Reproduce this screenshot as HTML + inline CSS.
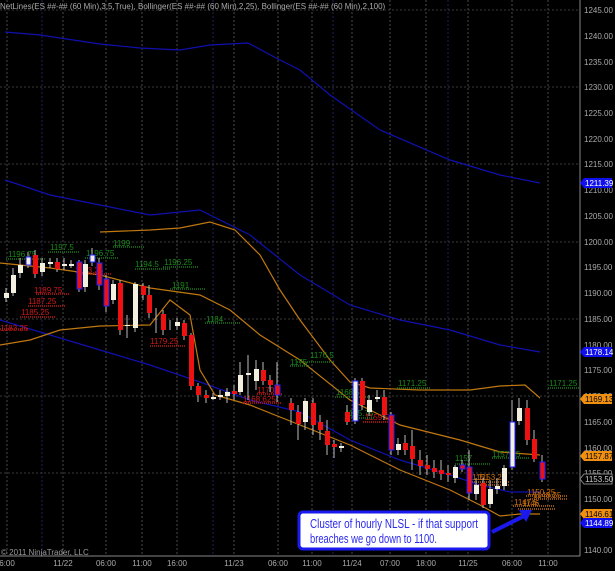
<!DOCTYPE html>
<html><head><meta charset="utf-8"><style>
html,body{margin:0;padding:0;background:#000;width:615px;height:571px;overflow:hidden}
svg{display:block}
text{font-family:"Liberation Sans",sans-serif}
</style></head><body>
<svg width="615" height="571" viewBox="0 0 615 571" xmlns="http://www.w3.org/2000/svg">
<rect width="615" height="571" fill="#000"/>
<g stroke="#4a4a4a" stroke-width="1" stroke-dasharray="2,2">
<line x1="7" y1="0" x2="7" y2="556"/><line x1="63" y1="0" x2="63" y2="556"/><line x1="106" y1="0" x2="106" y2="556"/>
<line x1="142" y1="0" x2="142" y2="556"/><line x1="177" y1="0" x2="177" y2="556"/><line x1="234" y1="0" x2="234" y2="556"/>
<line x1="278" y1="0" x2="278" y2="556"/><line x1="312" y1="0" x2="312" y2="556"/><line x1="352" y1="0" x2="352" y2="556"/>
<line x1="390" y1="0" x2="390" y2="556"/><line x1="426" y1="0" x2="426" y2="556"/><line x1="468" y1="0" x2="468" y2="556"/>
<line x1="512" y1="0" x2="512" y2="556"/><line x1="548" y1="0" x2="548" y2="556"/>
</g>
<g stroke="#22225a" stroke-width="1" stroke-dasharray="2,2">
<line x1="42" y1="0" x2="42" y2="556"/><line x1="213" y1="0" x2="213" y2="556"/><line x1="333" y1="0" x2="333" y2="556"/><line x1="448" y1="0" x2="448" y2="556"/>
</g>
<g stroke="#3a3a3a" stroke-width="1" stroke-dasharray="2,2">
<line x1="0" y1="10" x2="580" y2="10"/><line x1="0" y1="87" x2="580" y2="87"/><line x1="0" y1="164" x2="580" y2="164"/>
<line x1="0" y1="242" x2="580" y2="242"/><line x1="0" y1="319" x2="580" y2="319"/><line x1="0" y1="396" x2="580" y2="396"/><line x1="0" y1="473" x2="580" y2="473"/>
</g>
<line x1="580" y1="0" x2="580" y2="556" stroke="#888"/>
<line x1="0" y1="556" x2="580" y2="556" stroke="#888"/>
<g fill="none" stroke="#1010b0" stroke-width="1.2">
<polyline points="5,32 40,35 100,44 140,48 180,50 210,45 248,43 280,60 300,70 330,95 380,130 450,160 500,175 540,183"/>
<polyline points="5,180 50,195 100,205 150,215 200,210 250,235 300,275 350,305 400,320 450,330 500,345 540,352"/>
<polyline points="0,320 50,335 100,350 150,365 200,382 250,400 300,412 350,440 400,460 450,475 480,485 510,492 540,492"/>
</g>
<g fill="none" stroke="#c07810" stroke-width="1.2">
<polyline points="100,232 150,230 180,228 210,222 235,230 260,255 280,290 300,320 330,360 350,382 370,388 420,390 470,390 500,386 525,385 540,398"/>
<polyline points="0,263 50,268 100,275 150,288 200,295 230,310 260,335 300,360 350,400 400,425 460,440 500,452 540,455"/>
<polyline points="0,345 30,340 60,330 100,326 150,325 170,300 190,315 200,370 215,395 250,405 300,425 350,445 400,470 450,490 480,505 500,516 520,514 540,514"/>
</g>
<g font-size="8">
<g fill="#1a8a1a">
<text x="8" y="257">1196.75</text><text x="50" y="250">1197.5</text><text x="86" y="256">1196.75</text>
<text x="113" y="246">1199</text><text x="135" y="267">1194.5</text><text x="164" y="265">1196.25</text>
<text x="172" y="288">1191</text><text x="206" y="322">1184</text>
<text x="310" y="358">1176.5</text><text x="290" y="365">1175</text>
<text x="398" y="386">1171.25</text><text x="549" y="386">1171.25</text>
<text x="336" y="395">1168.5</text><text x="345" y="416">1165.75</text>
<text x="455" y="461">1157</text><text x="492" y="457">1157.75</text>
</g>
<g fill="#d01818">
<text x="34" y="293">1189.75</text><text x="28" y="304">1187.25</text><text x="21" y="315">1185.25</text>
<text x="0" y="331">1183.25</text><text x="75" y="273">1193.25</text><text x="150" y="344">1179.25</text>
<text x="257" y="393">1170</text><text x="243" y="402">1168.625</text><text x="365" y="420">1159.5</text>
</g>
<g fill="#d07010">
<text x="472" y="480">1151</text><text x="478" y="480">1153.25</text>
<text x="527" y="495">1150.25</text><text x="533" y="498">1148.25</text>
<text x="514" y="505">1147.5</text><text x="522" y="506">1146</text>
</g>
</g>
<g stroke-width="1.5" stroke-dasharray="1,1" fill="none">
<g stroke="#1a7a1a">
<line x1="6" y1="259" x2="45" y2="259"/><line x1="48" y1="252" x2="80" y2="252"/><line x1="85" y1="258" x2="118" y2="258"/>
<line x1="113" y1="247" x2="145" y2="247"/><line x1="135" y1="269" x2="170" y2="269"/><line x1="163" y1="267" x2="198" y2="267"/>
<line x1="170" y1="289" x2="205" y2="289"/><line x1="205" y1="323" x2="240" y2="323"/>
<line x1="297" y1="362" x2="335" y2="362"/><line x1="290" y1="366" x2="310" y2="366"/><line x1="397" y1="388" x2="430" y2="388"/>
<line x1="548" y1="388" x2="580" y2="388"/><line x1="455" y1="464" x2="490" y2="464"/><line x1="492" y1="458" x2="530" y2="458"/>
<line x1="335" y1="397" x2="370" y2="397"/><line x1="345" y1="418" x2="375" y2="418"/>
</g>
<g stroke="#c81515">
<line x1="36" y1="294" x2="70" y2="294"/><line x1="28" y1="306" x2="65" y2="306"/><line x1="20" y1="317" x2="55" y2="317"/>
<line x1="0" y1="329" x2="27" y2="329"/><line x1="80" y1="274" x2="112" y2="274"/><line x1="150" y1="346" x2="185" y2="346"/>
<line x1="257" y1="394" x2="282" y2="394"/><line x1="242" y1="403" x2="282" y2="403"/><line x1="363" y1="422" x2="397" y2="422"/>
</g>
<g stroke="#c06a10">
<line x1="470" y1="482" x2="510" y2="482"/><line x1="474" y1="485" x2="510" y2="485"/>
<line x1="526" y1="496" x2="568" y2="496"/><line x1="530" y1="499" x2="568" y2="499"/>
<line x1="513" y1="506" x2="555" y2="506"/><line x1="518" y1="509" x2="555" y2="509"/>
</g>
</g>
<g stroke="#bbb" stroke-width="1">
<line x1="6" y1="288" x2="6" y2="302"/><line x1="13" y1="268" x2="13" y2="296"/><line x1="20" y1="258" x2="20" y2="278"/>
<line x1="28" y1="252" x2="28" y2="268"/><line x1="35" y1="250" x2="35" y2="278"/><line x1="42" y1="258" x2="42" y2="276"/>
<line x1="50" y1="258" x2="50" y2="268"/><line x1="57" y1="258" x2="57" y2="272"/><line x1="64" y1="258" x2="64" y2="270"/>
<line x1="71" y1="260" x2="71" y2="268"/><line x1="79" y1="260" x2="79" y2="292"/><line x1="85" y1="260" x2="85" y2="292"/>
<line x1="92" y1="248" x2="92" y2="266"/><line x1="99" y1="258" x2="99" y2="290"/><line x1="106" y1="275" x2="106" y2="312"/>
<line x1="113" y1="280" x2="113" y2="304"/><line x1="120" y1="280" x2="120" y2="335"/><line x1="127" y1="315" x2="127" y2="338"/>
<line x1="135" y1="282" x2="135" y2="332"/><line x1="143" y1="283" x2="143" y2="300"/><line x1="149" y1="285" x2="149" y2="318"/>
<line x1="156" y1="308" x2="156" y2="333"/><line x1="163" y1="310" x2="163" y2="335"/><line x1="170" y1="320" x2="170" y2="330"/>
<line x1="177" y1="318" x2="177" y2="330"/><line x1="184" y1="320" x2="184" y2="340"/><line x1="191" y1="333" x2="191" y2="390"/>
<line x1="198" y1="383" x2="198" y2="402"/><line x1="206" y1="390" x2="206" y2="403"/><line x1="213" y1="393" x2="213" y2="400"/>
<line x1="220" y1="390" x2="220" y2="400"/><line x1="227" y1="388" x2="227" y2="403"/><line x1="234" y1="385" x2="234" y2="400"/>
<line x1="240" y1="362" x2="240" y2="395"/><line x1="248" y1="355" x2="248" y2="400"/><line x1="256" y1="360" x2="256" y2="390"/>
<line x1="263" y1="362" x2="263" y2="385"/><line x1="270" y1="375" x2="270" y2="392"/><line x1="277" y1="362" x2="277" y2="402"/>
<line x1="291" y1="398" x2="291" y2="425"/><line x1="298" y1="405" x2="298" y2="440"/><line x1="305" y1="398" x2="305" y2="430"/>
<line x1="313" y1="398" x2="313" y2="435"/><line x1="320" y1="415" x2="320" y2="440"/><line x1="327" y1="420" x2="327" y2="455"/>
<line x1="334" y1="440" x2="334" y2="458"/><line x1="341" y1="443" x2="341" y2="452"/><line x1="347" y1="405" x2="347" y2="425"/>
<line x1="355" y1="378" x2="355" y2="424"/><line x1="362" y1="378" x2="362" y2="410"/><line x1="369" y1="395" x2="369" y2="416"/>
<line x1="377" y1="390" x2="377" y2="402"/><line x1="384" y1="390" x2="384" y2="420"/><line x1="391" y1="412" x2="391" y2="455"/>
<line x1="398" y1="438" x2="398" y2="455"/><line x1="405" y1="435" x2="405" y2="455"/><line x1="412" y1="430" x2="412" y2="470"/>
<line x1="420" y1="450" x2="420" y2="475"/><line x1="427" y1="455" x2="427" y2="475"/><line x1="434" y1="460" x2="434" y2="478"/>
<line x1="441" y1="460" x2="441" y2="480"/><line x1="448" y1="465" x2="448" y2="482"/><line x1="455" y1="465" x2="455" y2="483"/>
<line x1="462" y1="460" x2="462" y2="472"/><line x1="469" y1="450" x2="469" y2="500"/><line x1="476" y1="478" x2="476" y2="500"/>
<line x1="483" y1="478" x2="483" y2="508"/><line x1="490" y1="480" x2="490" y2="508"/><line x1="497" y1="478" x2="497" y2="494"/>
<line x1="504" y1="465" x2="504" y2="490"/><line x1="512" y1="400" x2="512" y2="470"/><line x1="519" y1="398" x2="519" y2="425"/>
<line x1="527" y1="400" x2="527" y2="445"/><line x1="534" y1="430" x2="534" y2="462"/><line x1="542" y1="455" x2="542" y2="482"/>
</g>
<g fill="#f4f0e0">
<rect x="4" y="293" width="5" height="5"/><rect x="11" y="275" width="5" height="18"/><rect x="18" y="265" width="5" height="8"/>
<rect x="26" y="257" width="5" height="8" stroke="#2020ff"/><rect x="40" y="263" width="5" height="9"/><rect x="48" y="262" width="5" height="2"/>
<rect x="62" y="264" width="5" height="2"/><rect x="69" y="264" width="5" height="2"/><rect x="83" y="264" width="5" height="23"/>
<rect x="90" y="255" width="5" height="7" stroke="#2020ff"/><rect x="111" y="284" width="5" height="16"/><rect x="125" y="325" width="5" height="1"/>
<rect x="133" y="284" width="5" height="44"/><rect x="175" y="322" width="5" height="4"/><rect x="211" y="397" width="5" height="2"/>
<rect x="218" y="395" width="5" height="2"/><rect x="225" y="392" width="5" height="4"/><rect x="238" y="375" width="5" height="17"/>
<rect x="246" y="373" width="5" height="2"/><rect x="254" y="369" width="5" height="12"/><rect x="303" y="401" width="5" height="21"/>
<rect x="339" y="446" width="5" height="2"/><rect x="353" y="381" width="5" height="40" stroke="#2020ff"/><rect x="367" y="400" width="5" height="12"/>
<rect x="375" y="397" width="5" height="2"/><rect x="396" y="444" width="5" height="6"/><rect x="453" y="467" width="5" height="11"/>
<rect x="474" y="485" width="5" height="9"/><rect x="488" y="489" width="5" height="15"/><rect x="495" y="486" width="5" height="3"/>
<rect x="502" y="468" width="5" height="18"/><rect x="510" y="422" width="5" height="45" stroke="#2020ff"/><rect x="517" y="408" width="5" height="13"/>
</g>
<g fill="#ee1111">
<rect x="33" y="255" width="5" height="19"/><rect x="55" y="262" width="5" height="7"/><rect x="77" y="262" width="5" height="27" stroke="#2020ff"/>
<rect x="97" y="263" width="5" height="22" stroke="#2020ff"/><rect x="104" y="279" width="5" height="27" stroke="#2020ff"/><rect x="118" y="283" width="5" height="47"/>
<rect x="141" y="286" width="5" height="9"/><rect x="147" y="295" width="5" height="18"/><rect x="161" y="314" width="5" height="16"/>
<rect x="182" y="323" width="5" height="13"/><rect x="189" y="335" width="5" height="51"/><rect x="196" y="386" width="5" height="9"/>
<rect x="204" y="395" width="5" height="3"/><rect x="232" y="391" width="5" height="3"/><rect x="261" y="370" width="5" height="11"/>
<rect x="268" y="380" width="5" height="5"/><rect x="275" y="385" width="5" height="10" stroke="#2020ff"/><rect x="289" y="403" width="5" height="7"/>
<rect x="296" y="412" width="5" height="12"/><rect x="311" y="403" width="5" height="22"/><rect x="318" y="422" width="5" height="8"/>
<rect x="325" y="431" width="5" height="14"/><rect x="332" y="444" width="5" height="3"/><rect x="345" y="412" width="5" height="10"/>
<rect x="360" y="381" width="5" height="24"/><rect x="382" y="397" width="5" height="18"/><rect x="389" y="415" width="5" height="35" stroke="#2020ff"/>
<rect x="403" y="443" width="5" height="7"/><rect x="410" y="446" width="5" height="13"/><rect x="418" y="460" width="5" height="6"/>
<rect x="425" y="465" width="5" height="4"/><rect x="432" y="468" width="5" height="4"/><rect x="439" y="470" width="5" height="4"/>
<rect x="446" y="473" width="5" height="2"/><rect x="460" y="465" width="5" height="4" stroke="#2020ff"/><rect x="467" y="467" width="5" height="26" stroke="#2020ff"/>
<rect x="481" y="483" width="5" height="22"/><rect x="525" y="408" width="5" height="32"/><rect x="532" y="439" width="5" height="20"/>
<rect x="540" y="462" width="5" height="17" stroke="#2020ff"/>
</g>
<text x="0" y="9" font-size="8" fill="#aaa">NetLines(ES ##-## (60 Min),3,5,True), Bollinger(ES ##-## (60 Min),2,25), Bollinger(ES ##-## (60 Min),2,100)</text>
<g font-size="8" fill="#aaa">
<text x="584" y="13">1245.00</text><text x="584" y="39">1240.00</text><text x="584" y="65">1235.00</text><text x="584" y="90">1230.00</text>
<text x="584" y="116">1225.00</text><text x="584" y="142">1220.00</text><text x="584" y="167">1215.00</text><text x="584" y="193">1210.00</text>
<text x="584" y="219">1205.00</text><text x="584" y="245">1200.00</text><text x="584" y="270">1195.00</text><text x="584" y="296">1190.00</text>
<text x="584" y="322">1185.00</text><text x="584" y="348">1180.00</text><text x="584" y="373">1175.00</text><text x="584" y="399">1170.00</text>
<text x="584" y="425">1165.00</text><text x="584" y="451">1160.00</text><text x="584" y="476">1155.00</text><text x="584" y="502">1150.00</text>
<text x="584" y="528">1145.00</text><text x="584" y="553">1140.00</text>
</g>
<g font-size="8">
<path d="M580,183 L584,178 L612,178 L612,188 L584,188 Z" fill="#1010ee"/><text x="585" y="186" fill="#fff">1211.39</text>
<path d="M580,352 L584,347 L612,347 L612,357 L584,357 Z" fill="#1010ee"/><text x="585" y="355" fill="#fff">1178.14</text>
<path d="M580,399 L584,394 L612,394 L612,404 L584,404 Z" fill="#f09010"/><text x="585" y="402" fill="#000">1169.13</text>
<path d="M580,456 L584,451 L612,451 L612,461 L584,461 Z" fill="#f09010"/><text x="585" y="459" fill="#000">1157.87</text>
<path d="M580,479 L584,474 L612,474 L612,484 L584,484 Z" fill="#000" stroke="#888"/><text x="585" y="482" fill="#ccc">1153.50</text>
<path d="M580,514 L584,509 L612,509 L612,519 L584,519 Z" fill="#f09010"/><text x="585" y="517" fill="#000">1146.61</text>
<path d="M580,523 L584,518 L612,518 L612,528 L584,528 Z" fill="#1010ee"/><text x="585" y="526" fill="#fff">1144.89</text>
</g>
<g font-size="8" fill="#aaa" text-anchor="middle">
<text x="7" y="566">6:00</text><text x="63" y="566">11/22</text><text x="106" y="566">06:00</text><text x="142" y="566">11:00</text>
<text x="177" y="566">16:00</text><text x="234" y="566">11/23</text><text x="278" y="566">06:00</text><text x="312" y="566">11:00</text>
<text x="352" y="566">11/24</text><text x="390" y="566">07:00</text><text x="426" y="566">18:00</text><text x="468" y="566">11/25</text>
<text x="512" y="566">06:00</text><text x="548" y="566">11:00</text>
</g>
<text x="1" y="555" font-size="8" fill="#999">© 2011 NinjaTrader, LLC</text>
<rect x="299" y="512" width="190" height="37" rx="4" fill="#fff" stroke="#1a1aee" stroke-width="3"/>
<text x="310" y="528" font-size="13" fill="#2a2aee" textLength="168" lengthAdjust="spacingAndGlyphs">Cluster of hourly NLSL - if that support</text>
<text x="310" y="543" font-size="13" fill="#2a2aee" textLength="127" lengthAdjust="spacingAndGlyphs">breaches we go down to 1100.</text>
<line x1="492" y1="532" x2="524" y2="516" stroke="#1a1aee" stroke-width="4"/>
<path d="M532,510 L519,510 L526,522 Z" fill="#1a1aee"/>
</svg>
</body></html>
